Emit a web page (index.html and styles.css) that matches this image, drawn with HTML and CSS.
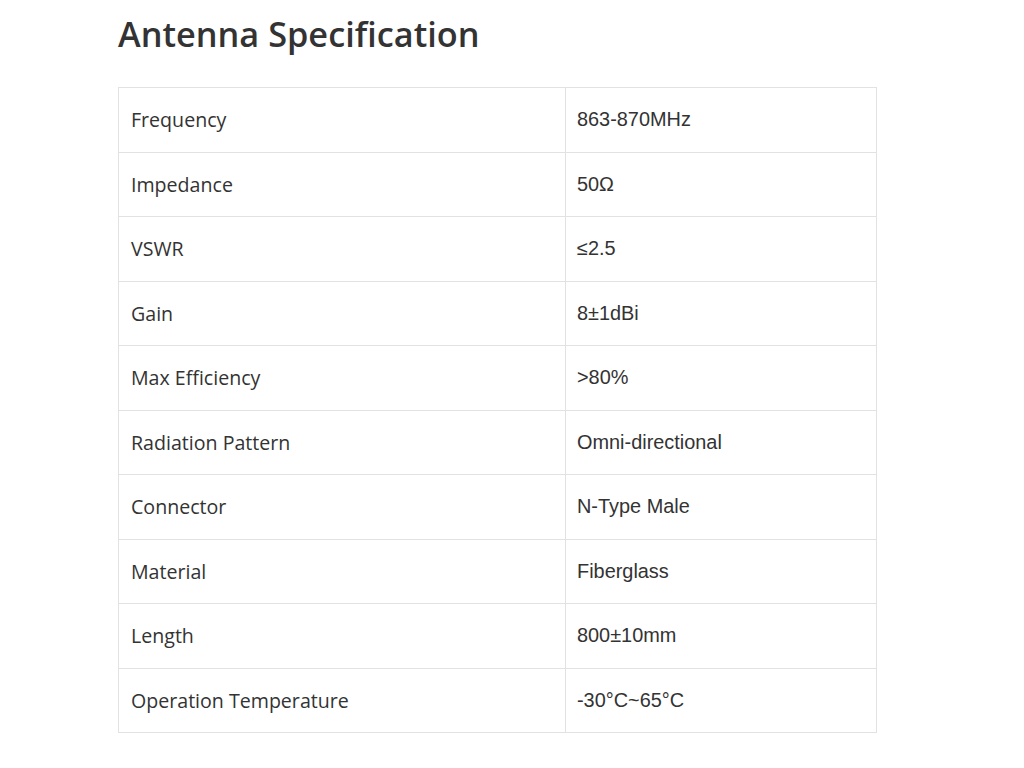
FILE: index.html
```html
<!DOCTYPE html>
<html>
<head>
<meta charset="utf-8">
<link rel="stylesheet" href="styles.css">
</head>
<body>
<main class="page">
  <h2 class="title">Antenna Specification</h2>
  <table class="spec">
    <tbody>
      <tr><td class="label">Frequency</td><td class="value">863-870MHz</td></tr>
      <tr><td class="label">Impedance</td><td class="value">50Ω</td></tr>
      <tr><td class="label">VSWR</td><td class="value">≤2.5</td></tr>
      <tr><td class="label">Gain</td><td class="value">8±1dBi</td></tr>
      <tr><td class="label">Max Efficiency</td><td class="value">&gt;80%</td></tr>
      <tr><td class="label">Radiation Pattern</td><td class="value">Omni-directional</td></tr>
      <tr><td class="label">Connector</td><td class="value">N-Type Male</td></tr>
      <tr><td class="label">Material</td><td class="value">Fiberglass</td></tr>
      <tr><td class="label">Length</td><td class="value">800±10mm</td></tr>
      <tr><td class="label">Operation Temperature</td><td class="value">-30°C~65°C</td></tr>
    </tbody>
  </table>
</main>
</body>
</html>
```
FILE: styles.css
```css
html, body {
  margin: 0;
  padding: 0;
  background: #ffffff;
}
.page {
  padding: 12px 0 0 118px;
  color: #333333;
}
.title {
  font-family: "Open Sans", sans-serif;
  font-weight: 600;
  font-size: 34.3px;
  line-height: 44px;
  margin: 0 0 31px 0;
  color: #333333;
}
.spec {
  border-collapse: collapse;
  width: 759px;
}
.spec td {
  border: 1px solid #e2e2e2;
  height: 64.5px;
  box-sizing: border-box;
  padding: 0 12px;
  vertical-align: middle;
  color: #333333;
}
.label {
  width: 447px;
  font-family: "Open Sans", sans-serif;
  font-size: 19.6px;
}
.spec .value {
  padding-left: 11px;
  font-family: "Liberation Sans", Arial, sans-serif;
  font-size: 19.9px;
}
```
